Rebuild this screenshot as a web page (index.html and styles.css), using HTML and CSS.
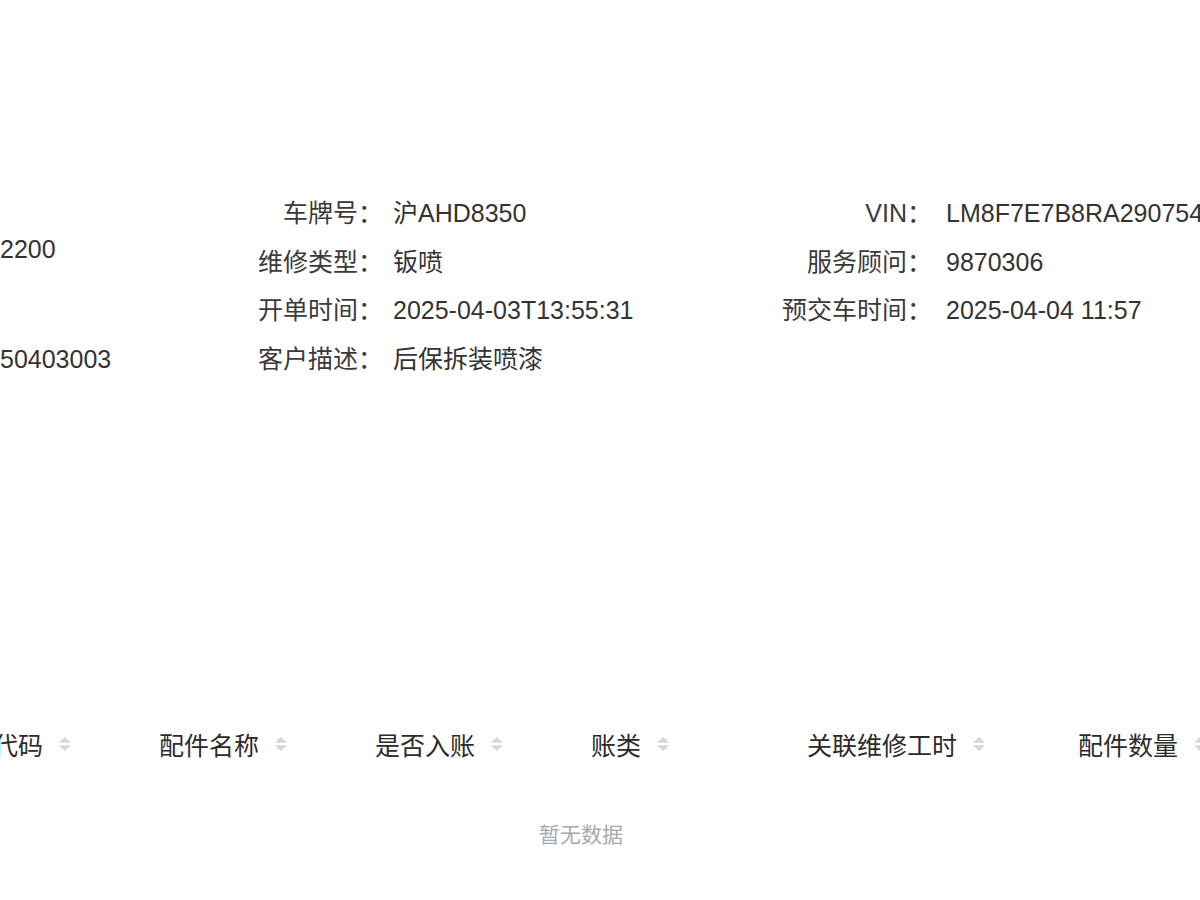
FILE: index.html
```html
<!DOCTYPE html>
<html lang="zh-CN">
<head>
<meta charset="utf-8">
<title>维修单详情</title>
<link rel="stylesheet" href="styles.css">
</head>
<body>
<div class="page">
  <section class="info">
    <div class="col-left">
      <div class="lv lv-1">2200</div>
      <div class="lv lv-2">50403003</div>
    </div>
    <div class="col col-mid">
      <div class="row"><span class="label">车牌号：</span><span class="value">沪AHD8350</span></div>
      <div class="row"><span class="label">维修类型：</span><span class="value">钣喷</span></div>
      <div class="row"><span class="label">开单时间：</span><span class="value">2025-04-03T13:55:31</span></div>
      <div class="row"><span class="label">客户描述：</span><span class="value">后保拆装喷漆</span></div>
    </div>
    <div class="col col-right">
      <div class="row"><span class="label">VIN：</span><span class="value">LM8F7E7B8RA290754</span></div>
      <div class="row"><span class="label">服务顾问：</span><span class="value">9870306</span></div>
      <div class="row"><span class="label">预交车时间：</span><span class="value">2025-04-04 11:57</span></div>
    </div>
  </section>

  <section class="table">
    <div class="thead">
      <div class="th w216"><span class="th-text">配件代码</span><svg class="sort" viewBox="0 0 14 20" width="14" height="20"><path d="M1 8.8 L7 2.8 L13 8.8 Z"/><path d="M1 11.2 L7 17.2 L13 11.2 Z"/></svg></div>
      <div class="th w216"><span class="th-text">配件名称</span><svg class="sort" viewBox="0 0 14 20" width="14" height="20"><path d="M1 8.8 L7 2.8 L13 8.8 Z"/><path d="M1 11.2 L7 17.2 L13 11.2 Z"/></svg></div>
      <div class="th w216"><span class="th-text">是否入账</span><svg class="sort" viewBox="0 0 14 20" width="14" height="20"><path d="M1 8.8 L7 2.8 L13 8.8 Z"/><path d="M1 11.2 L7 17.2 L13 11.2 Z"/></svg></div>
      <div class="th w216"><span class="th-text">账类</span><svg class="sort" viewBox="0 0 14 20" width="14" height="20"><path d="M1 8.8 L7 2.8 L13 8.8 Z"/><path d="M1 11.2 L7 17.2 L13 11.2 Z"/></svg></div>
      <div class="th w271"><span class="th-text">关联维修工时</span><svg class="sort" viewBox="0 0 14 20" width="14" height="20"><path d="M1 8.8 L7 2.8 L13 8.8 Z"/><path d="M1 11.2 L7 17.2 L13 11.2 Z"/></svg></div>
      <div class="th w216"><span class="th-text">配件数量</span><svg class="sort" viewBox="0 0 14 20" width="14" height="20"><path d="M1 8.8 L7 2.8 L13 8.8 Z"/><path d="M1 11.2 L7 17.2 L13 11.2 Z"/></svg></div>
    </div>
    <div class="empty">暂无数据</div>
  </section>
</div>
</body>
</html>
```

FILE: styles.css
```css
html, body {
  margin: 0;
  padding: 0;
  background: #ffffff;
  overflow: hidden;
}

body {
  width: 1200px;
  height: 900px;
  font-family: "Liberation Sans", "Noto Sans CJK SC", sans-serif;
  font-size: 25px;
  color: #333333;
}

.page {
  width: 1200px;
  height: 900px;
  overflow: hidden;
}

.info {
  display: flex;
  padding-top: 189px;
  line-height: 48.7px;
}

.col-left {
  width: 230px;
  flex: none;
}

.lv-1 {
  margin-top: 36px;
}

.lv-2 {
  margin-top: 61px;
}

.col {
  flex: none;
}

.col-mid {
  width: 550px;
}

.col-right {
  width: 420px;
}

.row {
  display: flex;
  white-space: nowrap;
}

.label {
  flex: none;
  text-align: right;
  color: #3a3a3a;
}

.col-mid .label {
  width: 153px;
}

.col-right .label {
  width: 152px;
}

.col-mid .value {
  margin-left: 10px;
}

.col-right .value {
  margin-left: 14px;
}

.table {
  margin-top: 335px;
  margin-left: -57px;
  width: 1276px;
}

.thead {
  display: flex;
  height: 50px;
  align-items: center;
  white-space: nowrap;
  color: #2b2b2b;
}

.th {
  flex: none;
  display: flex;
  align-items: center;
}

.w216 {
  width: 216px;
}

.w271 {
  width: 271px;
}

.sort {
  margin-left: 15px;
  fill: #d5d7de;
}

.empty {
  margin-top: 51px;
  text-align: center;
  font-size: 21px;
  color: #a6a9b0;
  line-height: 30px;
}
```
